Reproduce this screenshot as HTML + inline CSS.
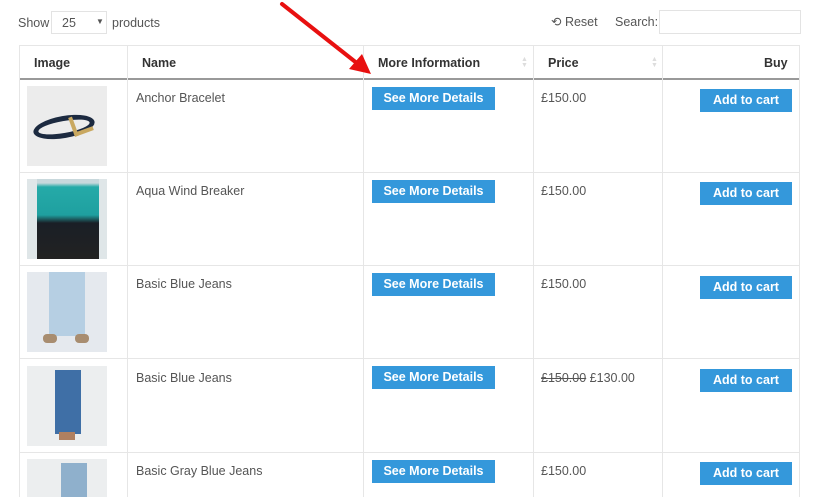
<!DOCTYPE html>
<html><head><meta charset="utf-8"><style>
*{margin:0;padding:0;box-sizing:border-box}
body{width:820px;height:497px;overflow:hidden;background:#fff;font-family:"Liberation Sans",sans-serif;color:#555;position:relative;font-size:12.5px}
.a{position:absolute}
.v{position:absolute;top:45px;bottom:0;width:1px;background:#e6e6e6}
.h{position:absolute;left:19px;width:781px;height:1px;background:#e6e6e6}
.th{position:absolute;top:56px;font-weight:bold;color:#333;font-size:12.5px}
.btn{position:absolute;background:#3498db;color:#fff;font-weight:bold;font-size:12.5px;text-align:center;line-height:23px;height:23px}
.sm{left:372px;width:123px}
.ac{left:700px;width:92px}
.img{position:absolute;left:27px;width:80px;height:80px;overflow:hidden}
.sort{position:absolute;top:57px;width:6px;height:12px;color:#ddd;font-size:7px;line-height:6px}
</style></head><body>
<div class="a" style="left:18px;top:16px">Show</div>
<div class="a" style="left:51px;top:11px;width:56px;height:23px;border:1px solid #e3e3e3;padding:4px 0 0 10px">25<span style="position:absolute;left:44px;top:5px;font-size:8px;color:#555">▼</span></div>
<div class="a" style="left:112px;top:16px">products</div>
<div class="a" style="left:551px;top:14px;font-size:12.5px">⟲ Reset</div>
<div class="a" style="left:615px;top:15px">Search:</div>
<div class="a" style="left:659px;top:10px;width:142px;height:24px;border:1px solid #e3e3e3"></div>

<div class="h" style="top:45px"></div>
<div class="a" style="left:19px;top:78px;width:781px;height:2px;background:#999"></div>
<div class="h" style="top:172px"></div>
<div class="h" style="top:265px"></div>
<div class="h" style="top:358px"></div>
<div class="h" style="top:452px"></div>
<div class="v" style="left:19px"></div>
<div class="v" style="left:127px"></div>
<div class="v" style="left:363px"></div>
<div class="v" style="left:533px"></div>
<div class="v" style="left:662px"></div>
<div class="v" style="left:799px"></div>

<div class="th" style="left:34px">Image</div>
<div class="th" style="left:142px">Name</div>
<div class="th" style="left:378px">More Information</div>
<div class="th" style="left:548px">Price</div>
<div class="th" style="left:764px">Buy</div>
<div class="sort" style="left:521px">▲<br>▼</div>
<div class="sort" style="left:651px">▲<br>▼</div>

<div class="img" style="top:86px;background:#ececec"><div style="position:absolute;left:6px;top:30px;width:62px;height:22px;border:5px solid #1c2a40;border-radius:50%;transform:rotate(-10deg)"></div><div style="position:absolute;left:44px;top:28px;width:20px;height:20px;border-left:4px solid #c9a860;border-bottom:4px solid #c9a860;transform:rotate(-20deg)"></div></div>
<div class="img" style="top:179px;background:linear-gradient(#c8d8dc 0 5%,#25aaa8 10%,#1fa0a0 45%,#1a1f26 55%,#222 100%)"><div style="position:absolute;left:0;top:0;width:10px;height:80px;background:#dfe6e8"></div><div style="position:absolute;right:0;top:0;width:8px;height:80px;background:#dfe6e8"></div></div>
<div class="img" style="top:272px;background:#e5e9ee"><div style="position:absolute;left:22px;top:0;width:36px;height:64px;background:#b6cfe3"></div><div style="position:absolute;left:16px;top:62px;width:14px;height:9px;background:#a88d70;border-radius:4px"></div><div style="position:absolute;left:48px;top:62px;width:14px;height:9px;background:#a88d70;border-radius:4px"></div></div>
<div class="img" style="top:366px;background:#eceeef"><div style="position:absolute;left:28px;top:4px;width:26px;height:64px;background:#3f6fa6"></div><div style="position:absolute;left:32px;top:66px;width:16px;height:8px;background:#b08060"></div></div>
<div class="img" style="top:459px;background:#eceeef;height:38px"><div style="position:absolute;left:34px;top:4px;width:26px;height:34px;background:#8fb0cc"></div></div>

<div class="a" style="left:136px;top:91px">Anchor Bracelet</div>
<div class="a" style="left:136px;top:184px">Aqua Wind Breaker</div>
<div class="a" style="left:136px;top:277px">Basic Blue Jeans</div>
<div class="a" style="left:136px;top:371px">Basic Blue Jeans</div>
<div class="a" style="left:136px;top:464px">Basic Gray Blue Jeans</div>

<div class="btn sm" style="top:87px">See More Details</div>
<div class="btn sm" style="top:180px">See More Details</div>
<div class="btn sm" style="top:273px">See More Details</div>
<div class="btn sm" style="top:366px">See More Details</div>
<div class="btn sm" style="top:460px">See More Details</div>

<div class="a" style="left:541px;top:91px">£150.00</div>
<div class="a" style="left:541px;top:184px">£150.00</div>
<div class="a" style="left:541px;top:277px">£150.00</div>
<div class="a" style="left:541px;top:371px"><s>£150.00</s> £130.00</div>
<div class="a" style="left:541px;top:464px">£150.00</div>

<div class="btn ac" style="top:89px">Add to cart</div>
<div class="btn ac" style="top:182px">Add to cart</div>
<div class="btn ac" style="top:276px">Add to cart</div>
<div class="btn ac" style="top:369px">Add to cart</div>
<div class="btn ac" style="top:462px">Add to cart</div>

<svg class="a" style="left:0;top:0" width="820" height="100"><line x1="282" y1="4" x2="358" y2="64" stroke="#e81010" stroke-width="4" stroke-linecap="round"/><polygon points="371,74 349,69 362,54" fill="#e81010"/></svg>
</body></html>
